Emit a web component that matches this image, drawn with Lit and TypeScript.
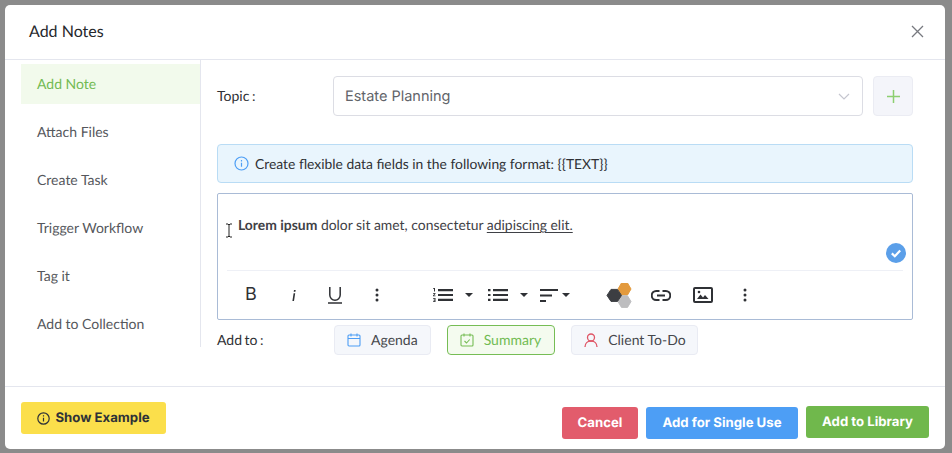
import { LitElement, html, css, svg } from "lit";
import { customElement } from "lit/decorators.js";

const dots = svg`<circle cx="8" cy="3" r="1.5"/><circle cx="8" cy="8" r="1.5"/><circle cx="8" cy="13" r="1.5"/>`;

@customElement("app-root")
export class AppRoot extends LitElement {
  static styles = css`
    :host { display: block; width: 952px; height: 453px; box-sizing: border-box; padding: 5px 7px 4px 5px; background: #8b8b8b; font-family: Lato, sans-serif; color: #3d3f44; overflow: hidden; text-rendering: geometricPrecision; font-variant-ligatures: common-ligatures; }
    * { box-sizing: border-box; }
    .modal { height: 444px; background: #fff; border-radius: 5px; display: flex; flex-direction: column; }
    .head { height: 55px; flex: none; display: flex; align-items: center; justify-content: space-between; padding: 0 21px 1px 24px; border-bottom: 1px solid #e4e6ee; }
    .head h1 { margin: 0; font-size: 16px; font-weight: 400; color: #26282c; }
    .body { flex: 1; display: flex; min-height: 0; }
    .nav { width: 196px; flex: none; margin: 0 0 39px 0; padding: 4px 0 0 16px; border-right: 1px solid #e4e6ee; display: flex; flex-direction: column; gap: 8px; }
    .nav div { height: 40px; padding: 0 0 1px 16px; display: flex; align-items: center; font-size: 14px; color: #55575c; }
    .nav .on { background: #f2faec; color: #72bb53; }
    .main { flex: 1; padding: 16px 32px 0 16px; min-width: 0; }
    .row { display: flex; align-items: center; }
    .label { width: 116px; flex: none; font-size: 14px; color: #2f3135; padding-bottom: 1px; word-spacing: -1px; }
    .select { flex: 1; height: 40px; border: 1px solid #dcdde4; border-radius: 4px; display: flex; align-items: center; justify-content: space-between; padding: 0 12px 0 11px; font-family: Inter, sans-serif; font-size: 14.500px; color: #62646a; }
    .plus { width: 40px; height: 40px; flex: none; margin-left: 10px; background: #f4f5fa; border: 1px solid #ebecf3; border-radius: 4px; display: flex; align-items: center; justify-content: center; }
    .info { height: 39px; margin-top: 28px; display: flex; align-items: center; gap: 6px; padding-left: 16px; background: #e9f5fd; border: 1px solid #b9dcf5; border-radius: 4px; font-size: 13.860px; color: #2f3135; }
    .editor { height: 127px; margin-top: 10px; border: 1px solid #a9bbd6; border-radius: 2px; padding: 0 9px; display: flex; flex-direction: column; position: relative; }
    .text { height: 77px; padding: 22px 0 0 11px; font-size: 13.920px; line-height: 17px; color: #3f4146; border-bottom: 1px solid #eef0f6; white-space: nowrap; }
    .text b { font-weight: 700; }
    .text u { text-underline-offset: 2px; }
    .cursor { position: absolute; left: 7px; top: 29px; }
    .tick { position: absolute; right: 6px; top: 49px; }
    .tools { flex: 1; display: flex; align-items: center; color: #2f3135; position: relative; }
    .tool { display: flex; align-items: center; justify-content: center; flex: none; width: 32px; height: 24px; }
    .b { margin-left: 8px; }
    .m10 { margin-left: 10px; }
    .ol { margin-left: 40px; width: 20px; }
    .ul { margin-left: 15px; width: 20px; }
    .al { margin-left: 12px; width: 18px; }
    .hex { margin-left: 36px; width: 26px; }
    .lnk { margin-left: 19px; width: 20px; }
    .img { margin-left: 22px; width: 20px; }
    .more { margin-left: 24px; width: 16px; }
    .tools svg { display: block; }
    .bi { font-family: Inter, sans-serif; font-weight: 400; font-size: 18px; line-height: 1; color: #2f3135; }
    .caret { width: 0; height: 0; border: 4px solid transparent; border-top: 4.500px solid #2f3135; border-bottom: 0; flex: none; margin-left: 12px; }
    .caret.near { margin-left: 4px; }
    .add { margin-top: 5px; }
    .chips { display: flex; gap: 16px; margin-left: 1px; }
    .chip { height: 30px; display: flex; align-items: center; gap: 10px; padding: 0 12px 1px; background: #f5f7fb; border: 1px solid #e9ebf3; border-radius: 4px; font-size: 14px; color: #45474c; }
    .chip.sel { background: #f4fbef; border-color: #76bd55; color: #72bb53; padding-right: 13px; }
    .chip.todo { padding-right: 11px; }
    .foot { height: 63px; flex: none; border-top: 1px solid #e4e6ee; display: flex; justify-content: space-between; padding: 15px 16px 0 16px; }
    .btn { font-family: Inter, sans-serif; font-weight: 700; font-size: 13.200px; color: #fff; height: 32px; border-radius: 3px; display: flex; align-items: center; justify-content: center; border: 0; white-space: nowrap; }
    .show { width: 145px; background: #fbdf4b; color: #2f3238; gap: 5px; }
    .right { display: flex; gap: 8px; align-items: flex-start; padding-top: 4px; }
    .cancel { width: 76px; background: #e25c6c; margin-top: 1px; }
    .single { width: 152px; background: #4d9ef5; margin-top: 1px; }
    .lib { width: 123px; background: #70b84c; }
  `;

  render() {
    return html`<div class="modal">
      <div class="head"><h1>Add Notes</h1>
        <svg width="13" height="13" viewBox="0 0 13 13" fill="none" stroke="#77797f" stroke-width="1.3"><path d="M1 1l11 11M12 1L1 12"/></svg>
      </div>
      <div class="body">
        <div class="nav">
          <div class="on">Add Note</div><div>Attach Files</div><div>Create Task</div><div>Trigger Workflow</div><div>Tag it</div><div>Add to Collection</div>
        </div>
        <div class="main">
          <div class="row">
            <div class="label">Topic :</div>
            <div class="select">Estate Planning
              <svg width="12" height="7" viewBox="0 0 12 7" fill="none" stroke="#c5c6cf" stroke-width="1.2"><path d="M1 1l5 5 5-5"/></svg>
            </div>
            <div class="plus"><svg width="13" height="13" viewBox="0 0 13 13" stroke="#8ccf70" stroke-width="1.5"><path d="M6.5 0v13M0 6.5h13"/></svg></div>
          </div>
          <div class="info">
            <svg width="15" height="15" viewBox="0 0 15 15" fill="none" stroke="#4d9ef5" stroke-width="1.2"><circle cx="7.5" cy="7.5" r="6.5"/><path d="M7.5 6.8v4M7.5 4v1.4"/></svg>
            Create flexible data fields in the following format: {{TEXT}}
          </div>
          <div class="editor">
            <div class="text"><b>Lorem ipsum</b> dolor sit amet, consectetur <u>adipiscing elit.</u></div>
            <svg class="cursor" width="8" height="15" viewBox="0 0 8 15" fill="none" stroke="#222" stroke-width="1"><path d="M1 1h2l1 1 1-1h2M4 2v11M1 14h2l1-1 1 1h2"/></svg>
            <svg class="tick" width="20" height="20" viewBox="0 0 20 20"><circle cx="10" cy="10" r="10" fill="#5b9fe9"/><path d="M5.8 10.4l3 2.8 5.4-5.600" fill="none" stroke="#fff" stroke-width="2.200"/></svg>
            <div class="tools">
              <div class="tool b"><span class="bi">B</span></div>
              <div class="tool m10"><svg width="12" height="16" viewBox="0 0 12 16"><path d="M6.6 6.2h1.6L7 14H5.4zM7 3h1.700l-.3 1.800H6.700z" fill="#2f3135"/></svg></div>
              <div class="tool m10"><svg width="16" height="18" viewBox="0 0 16 18" fill="none" stroke="#2f3135" stroke-width="1.500"><path d="M2.800 1v8a5.200 5.200 0 0 0 10.400 0V1M1 17h14"/></svg></div>
              <div class="tool m10"><svg width="16" height="16" viewBox="0 0 16 16" fill="#2f3135">${dots}</svg></div>
              <div class="tool ol"><svg width="20" height="14" viewBox="0 0 20 14" fill="#2f3135"><path d="M5 1h15v2.200H5zM5 5.900h15v2.200H5zM5 10.800h15V13H5z"/><path d="M0 0h2v3.500H1V.8H0zM0 5h2.500v.8L1 7.600h1.500v.7H0v-.7l1.500-1.800H0zM0 10h2.500v4H0v-.7h1.500v-.9H.5v-.7h1v-1H0z"/></svg></div>
              <div class="caret"></div>
              <div class="tool ul"><svg width="20" height="14" viewBox="0 0 20 14" fill="#2f3135"><path d="M5 1h15v2.200H5zM5 5.900h15v2.200H5zM5 10.800h15V13H5zM0 1h2.500v2.200H0zM0 5.900h2.500v2.200H0zM0 10.800h2.500V13H0z"/></svg></div>
              <div class="caret"></div>
              <div class="tool al"><svg width="18" height="13" viewBox="0 0 18 13" fill="#2f3135"><path d="M0 0h18v2H0zM0 5.500h12v2H0zM0 11h6v2H0z"/></svg></div>
              <div class="caret near"></div>
              <div class="tool hex"><svg width="26" height="25" viewBox="0 0 26 25"><path d="M15.500 0h6l3.500 6-3.500 6h-6L12 6z" fill="#e39a3d" stroke="#e39a3d" stroke-linejoin="round"/><path d="M15.500 12.800h6l3.500 5.800-3.500 5.800h-6L12 18.600z" fill="#bdbdbf" stroke="#bdbdbf" stroke-linejoin="round"/><path d="M5 6.400h6.500l4 6-4 6H5l-4-6z" fill="#3c3e42" stroke="#3c3e42" stroke-linejoin="round"/></svg></div>
              <div class="tool lnk"><svg width="20" height="11" viewBox="0 0 20 11" fill="none" stroke="#2f3135" stroke-width="2"><path d="M8.500 1H5.200a4.500 4.500 0 0 0 0 9h3.300M11.500 1h3.300a4.500 4.500 0 0 1 0 9h-3.300M6 5.500h8"/></svg></div>
              <div class="tool img"><svg width="20" height="16" viewBox="0 0 20 16"><rect x="1" y="1" width="18" height="14" rx="1" fill="none" stroke="#2f3135" stroke-width="2"/><path d="M4 12l3.500-4.500L10 10.500l2-2.500 3.500 4z" fill="#2f3135"/><circle cx="6" cy="5" r="1.300" fill="#2f3135"/></svg></div>
              <div class="tool more"><svg width="16" height="16" viewBox="0 0 16 16" fill="#2f3135">${dots}</svg></div>
            </div>
          </div>
          <div class="row add">
            <div class="label">Add to :</div>
            <div class="chips">
              <div class="chip"><svg width="14" height="14" viewBox="0 0 14 14" fill="none" stroke="#4d9ef5" stroke-width="1.100"><rect x="1" y="2" width="12" height="11" rx="1"/><path d="M1 5.500h12M4 .5v3M10 .5v3"/></svg>Agenda</div>
              <div class="chip sel"><svg width="14" height="14" viewBox="0 0 14 14" fill="none" stroke="#76bd55" stroke-width="1.100"><rect x="1" y="2" width="12" height="11" rx="1"/><path d="M4 .5v3M10 .5v3M4.500 8l2 2 3.200-3.500"/></svg>Summary</div>
              <div class="chip todo"><svg width="14" height="14" viewBox="0 0 14 14" fill="none" stroke="#df5566" stroke-width="1.300"><circle cx="7" cy="4.500" r="3.500"/><path d="M1 14c0-3.500 2.500-6 6-6s6 2.500 6 6"/></svg>Client To-Do</div>
            </div>
          </div>
        </div>
      </div>
      <div class="foot">
        <div class="btn show"><svg width="13" height="13" viewBox="0 0 13 13" fill="none" stroke="#2f3238" stroke-width="1.200"><circle cx="6.500" cy="6.500" r="5.700"/><path d="M6.500 5.800v3.700M6.500 3.200v1.300"/></svg>Show Example</div>
        <div class="right">
          <div class="btn cancel">Cancel</div>
          <div class="btn single">Add for Single Use</div>
          <div class="btn lib">Add to Library</div>
        </div>
      </div>
    </div>`;
  }
}
